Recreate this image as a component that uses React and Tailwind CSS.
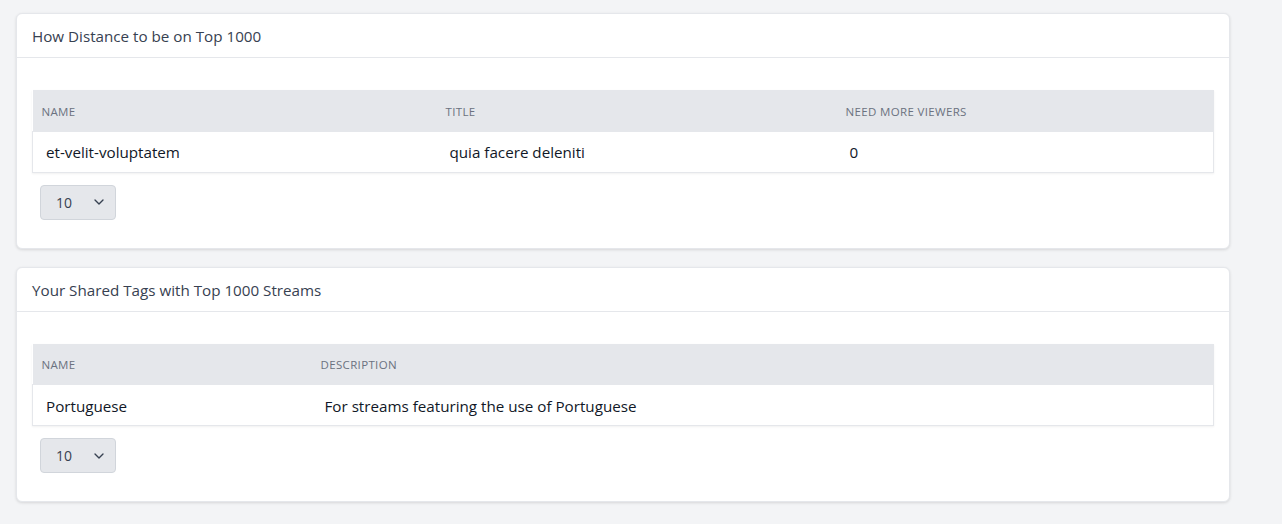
import React from 'react';

const font = { fontFamily: '"Open Sans", "Noto Sans", sans-serif' };

function PageSize() {
  return (
    <div className="ml-2 mt-[12px] flex h-[35px] w-[76px] items-center justify-between rounded border border-[#d1d5db] bg-[#e5e7eb] pl-[15px] pr-[8px] text-[14px] text-[#374151]">
      <span>10</span>
      <svg width="16" height="16" viewBox="0 0 24 24" fill="none" stroke="#374151" strokeWidth="2" strokeLinecap="round" strokeLinejoin="round">
        <path d="M6 9l6 6 6-6" />
      </svg>
    </div>
  );
}

function DataCard({ title, columns, row }) {
  return (
    <div className="w-[1214px] rounded-md border border-[#e5e7eb] bg-white shadow-[0_1px_3px_rgba(0,0,0,0.12)]">
      <div className="flex h-[44px] items-center border-b border-[#e5e7eb] px-[15px] pt-[2px] text-[15.2px] text-[#374151]">
        {title}
      </div>
      <div className="px-[15px] pb-[28px] pt-[32px]">
        <table className="w-full border-collapse shadow-[0_1px_2px_rgba(0,0,0,0.06)]">
          <thead>
            <tr className="h-[41px] bg-[#e5e7eb]">
              {columns.map((c) => (
                <th
                  key={c.label}
                  className="pl-[9px] pt-[2px] text-left text-[11.5px] font-normal uppercase tracking-[0.03em] text-[#6b7280]"
                  style={c.width ? { width: c.width } : undefined}
                >
                  {c.label}
                </th>
              ))}
            </tr>
          </thead>
          <tbody>
            <tr className="h-[41px] border border-[#e5e7eb]">
              {row.map((v, i) => (
                <td key={i} className="pl-[13px] pt-[2px] text-[15.2px] text-[#111827]">
                  {v}
                </td>
              ))}
            </tr>
          </tbody>
        </table>
        <PageSize />
      </div>
    </div>
  );
}

export default function App() {
  return (
    <div className="min-h-[524px] bg-[#f3f4f6] pl-4 pt-[13px]" style={font}>
      <div className="flex flex-col gap-[18px]">
        <DataCard
          title="How Distance to be on Top 1000"
          columns={[
            { label: 'Name', width: 404 },
            { label: 'Title', width: 400 },
            { label: 'Need more viewers' },
          ]}
          row={['et-velit-voluptatem', 'quia facere deleniti', '0']}
        />
        <DataCard
          title="Your Shared Tags with Top 1000 Streams"
          columns={[{ label: 'Name', width: 279 }, { label: 'Description' }]}
          row={['Portuguese', 'For streams featuring the use of Portuguese']}
        />
      </div>
    </div>
  );
}
